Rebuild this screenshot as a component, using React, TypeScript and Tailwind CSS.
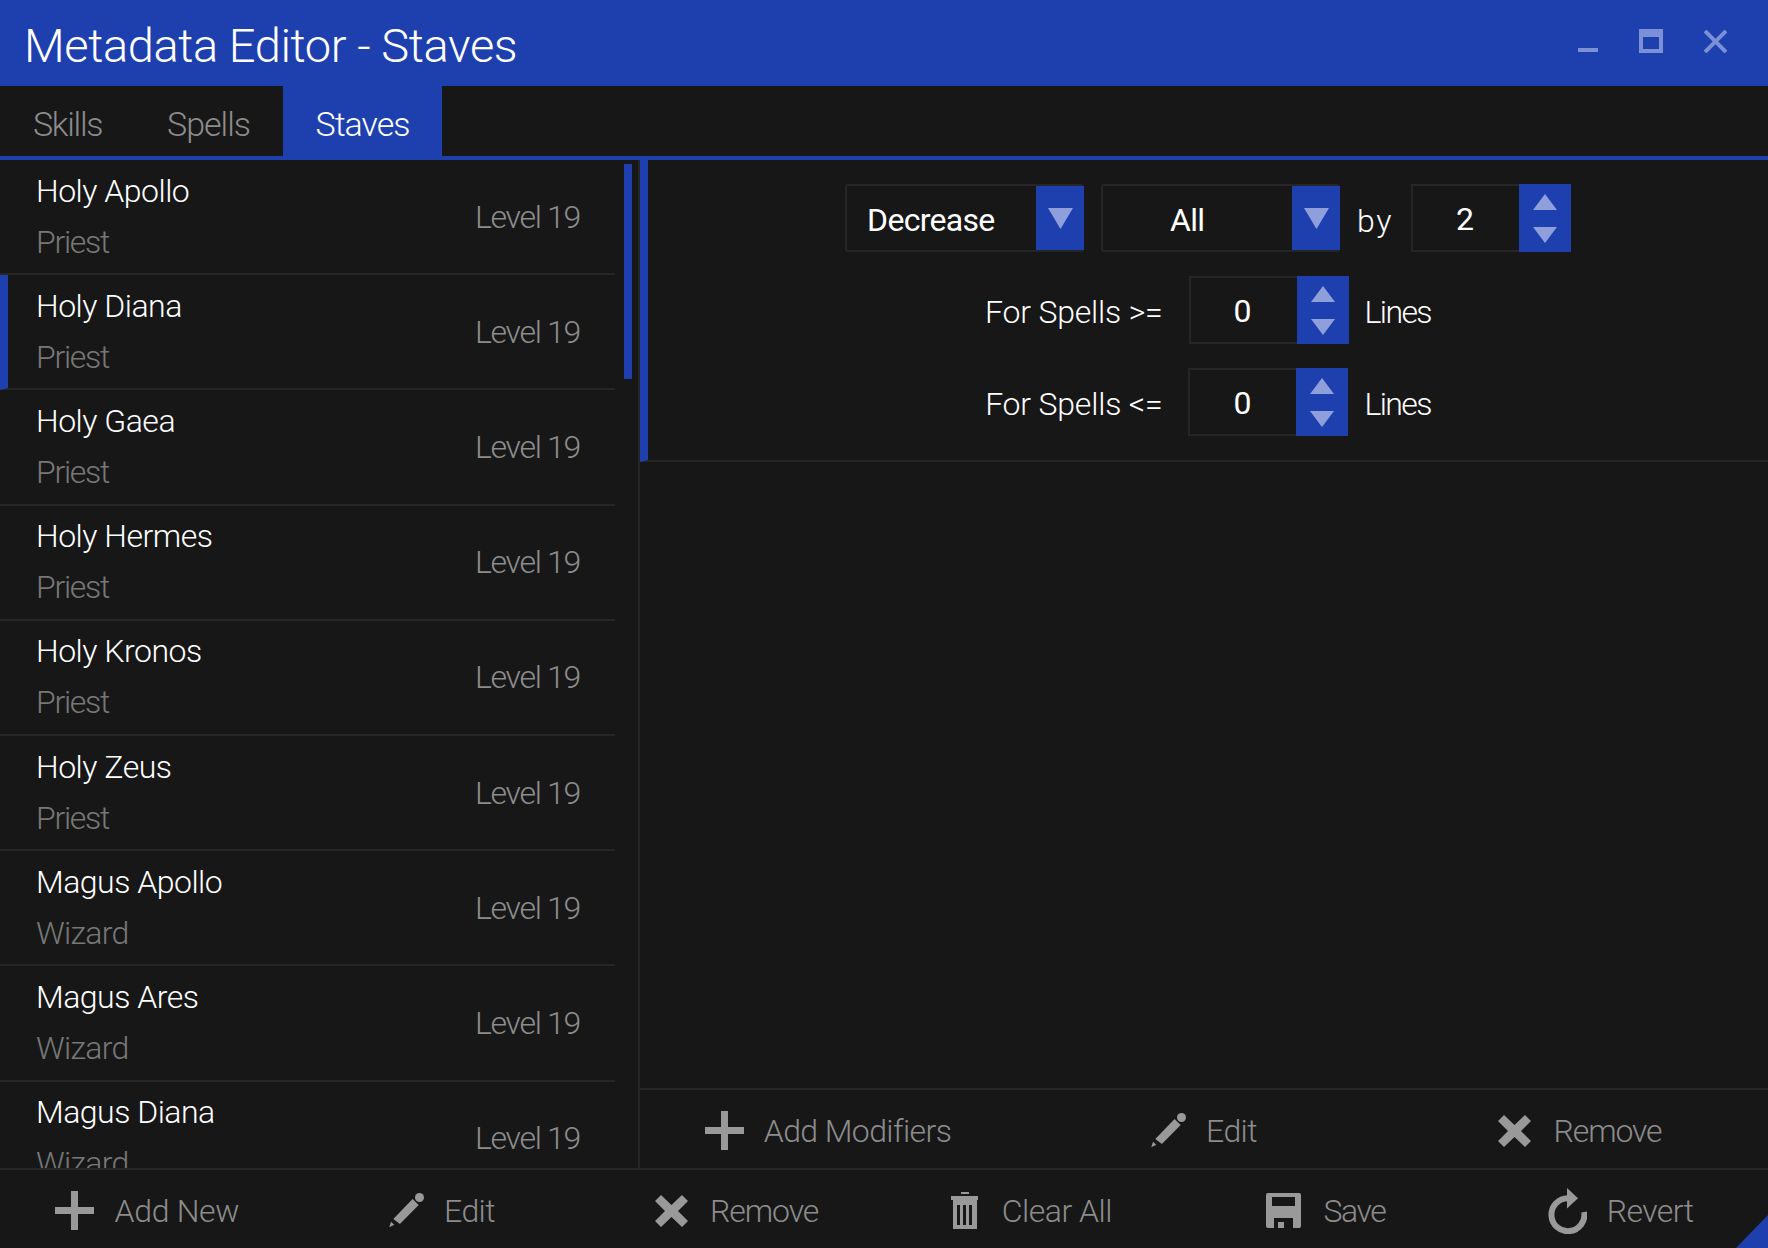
import type { ReactNode } from "react";

const FONT = "font-['Roboto','Open_Sans',sans-serif] font-light";

const staves = [
  { name: "Holy Apollo", kind: "Priest" },
  { name: "Holy Diana", kind: "Priest", selected: true },
  { name: "Holy Gaea", kind: "Priest" },
  { name: "Holy Hermes", kind: "Priest" },
  { name: "Holy Kronos", kind: "Priest" },
  { name: "Holy Zeus", kind: "Priest" },
  { name: "Magus Apollo", kind: "Wizard" },
  { name: "Magus Ares", kind: "Wizard" },
  { name: "Magus Diana", kind: "Wizard" },
];

function PlusIcon() {
  return (
    <svg width="39" height="39" viewBox="0 0 39 39" fill="#999">
      <path d="M16 0h7v16h16v7H23v16h-7V23H0v-7h16z" />
    </svg>
  );
}

function PencilIcon() {
  return (
    <svg width="35" height="35" viewBox="0 0 35 35" fill="#999">
      <path d="M4.300 26L23.600 6l6.100 6L10.900 31zM2 28.700L5.300 31.700 0.300 34.300z" />
      <circle cx="30.500" cy="4.500" r="4.500" />
    </svg>
  );
}

function CrossIcon() {
  return (
    <svg width="33" height="32" viewBox="0 0 33 32" fill="#999">
      <path d="M6 0l10.500 10L27 0l6 6-10 10 10 10-6 6-10.500-10L6 32l-6-6 10-10L0 6z" />
    </svg>
  );
}

function TrashIcon() {
  return (
    <svg width="27" height="37" viewBox="0 0 27 37" fill="#999">
      <path d="M10 0h8v2h-8zM0 4h27v4H0z" />
      <path d="M2 8h24v29H2zM6 13v20h3V13zM12 13v20h3V13zM18 13v20h3V13z" fillRule="evenodd" />
    </svg>
  );
}

function SaveIcon() {
  return (
    <svg width="35" height="35" viewBox="0 0 35 35" fill="#999">
      <path
        d="M2 0h31a2 2 0 0 1 2 2v31a2 2 0 0 1-2 2H2a2 2 0 0 1-2-2V2a2 2 0 0 1 2-2zM6 4v9h23V4zM8 25v10h19V25z"
        fillRule="evenodd"
      />
      <path d="M12 29h6v6h-6z" />
    </svg>
  );
}

function RevertIcon() {
  return (
    <svg width="39" height="46" viewBox="0 0 39 46" fill="none">
      <path d="M20 10.200A16.500 16.500 0 1 0 36.200 24" stroke="#999" strokeWidth="6" />
      <path d="M19 0l11 10.300L19 20.600z" fill="#999" />
    </svg>
  );
}

function ActionButton({
  icon,
  label,
  className = "gap-[20px] tracking-[-0.6px]",
}: {
  icon: ReactNode;
  label: string;
  className?: string;
}) {
  return (
    <div className={`flex items-center justify-center pt-[3px] text-[32px] text-[#8c8c8c] ${className}`}>
      {icon}
      <span>{label}</span>
    </div>
  );
}

function ArrowUp() {
  return (
    <svg width="24" height="16" viewBox="0 0 24 16" fill="#8f9fdc">
      <path d="M12 0l12 16H0z" />
    </svg>
  );
}

function ArrowDown() {
  return (
    <svg width="24" height="16" viewBox="0 0 24 16" fill="#8f9fdc">
      <path d="M0 0h24L12 16z" />
    </svg>
  );
}

function Combo({ label, textClass }: { label: string; textClass: string }) {
  return (
    <div className="flex h-[68px] w-[239px] rounded-[3px] border-2 border-[#262626]">
      <div className={`flex flex-1 items-center pt-[3px] text-[32px] font-normal tracking-[-0.7px] text-white ${textClass}`}>
        {label}
      </div>
      <div className="-mr-[2px] flex w-[48px] items-center justify-center bg-[#1e40af]">
        <svg width="25" height="21" viewBox="0 0 25 21" fill="#8f9fdc">
          <path d="M0 0h25L12.500 21z" />
        </svg>
      </div>
    </div>
  );
}

function Spinner({ value }: { value: string }) {
  return (
    <div className="flex h-[68px] w-[160px]">
      <div className="flex flex-1 items-center justify-center border-2 border-r-0 border-[#262626] pr-[2px] pt-[2px] text-[32px] font-normal text-white">
        {value}
      </div>
      <div className="flex w-[52px] flex-col items-center justify-center gap-[17px] bg-[#1e40af]">
        <ArrowUp />
        <ArrowDown />
      </div>
    </div>
  );
}

function StaveRow({ name, kind, selected }: { name: string; kind: string; selected?: boolean }) {
  return (
    <div
      className={`flex h-[115.2px] shrink-0 items-center justify-between border-b-2 border-[#262626] pr-[35px] last:h-[119px] ${
        selected ? "border-l-8 border-l-[#1e40af] pl-[28px]" : "pl-[36px]"
      }`}
    >
      <div className="flex flex-col gap-[2px]">
        <span className="text-[32px] leading-[49px] tracking-[-0.5px] text-white">{name}</span>
        <span
          className={`text-[32px] leading-[49px] text-[#777] ${
            kind === "Priest" ? "tracking-[-1.3px]" : "tracking-[-0.7px]"
          }`}
        >
          {kind}
        </span>
      </div>
      <span className="text-[32px] tracking-[-1.3px] text-[#8c8c8c]">Level 19</span>
    </div>
  );
}

export default function App() {
  return (
    <div className={`flex h-[1248px] w-[1768px] flex-col overflow-hidden bg-[#171717] ${FONT}`}>
      <header className="flex h-[86px] shrink-0 items-center justify-between bg-[#1e40af] pl-[24px] pr-[41px]">
        <h1 className="pt-[6px] text-[47px] font-light tracking-[-0.4px] text-white">Metadata Editor - Staves</h1>
        <div className="mb-[4px] flex items-start">
          <div className="mt-[19px] h-[4px] w-[20px] bg-[#7b90d6]" />
          <div className="ml-[41px] h-[24px] w-[24px] border-4 border-t-8 border-[#7b90d6]" />
          <svg className="ml-[41px] mt-[1px]" width="23" height="23" viewBox="0 0 23 23" stroke="#7b90d6" strokeWidth="4">
            <path d="M1 1l21 21M22 1L1 22" />
          </svg>
        </div>
      </header>

      <nav className="flex h-[74px] shrink-0 border-b-4 border-[#1e40af] text-[34px] tracking-[-1px]">
        <div className="flex w-[134px] items-center pl-[33px] pt-[6px] tracking-[-1.3px] text-[#8c8c8c]">Skills</div>
        <div className="flex w-[149px] items-center pl-[33px] pt-[6px] text-[#8c8c8c]">Spells</div>
        <div className="flex w-[159px] items-center justify-center bg-[#1e40af] pt-[6px] text-white">Staves</div>
      </nav>

      <main className="flex min-h-0 flex-1">
        <section className="relative flex w-[640px] shrink-0 flex-col overflow-hidden border-r-2 border-[#262626] pr-[23px]">
          {staves.map((s) => (
            <StaveRow key={s.name} {...s} />
          ))}
          <div className="absolute left-[624px] top-[4px] h-[215px] w-[8px] bg-[#1e40af]" />
        </section>

        <section className="flex min-w-0 flex-1 flex-col">
          <div className="flex h-[302px] shrink-0 flex-col items-center gap-[24px] border-b-2 border-l-8 border-[#262626] border-l-[#1e40af] pt-[24px] text-[32px] text-white">
            <div className="flex items-center">
              <Combo label="Decrease" textClass="pl-[20px]" />
              <div className="ml-[17px]">
                <Combo label="All" textClass="pl-[67px]" />
              </div>
              <span className="ml-[17px] mr-[18px] pt-[5px] tracking-[1.5px]">by</span>
              <Spinner value="2" />
            </div>
            <div className="flex items-center">
              <span className="mr-[26px] pt-[3px] tracking-[-0.2px]">For Spells &gt;=</span>
              <Spinner value="0" />
              <span className="ml-[16px] pt-[3px] tracking-[-1.6px]">Lines</span>
            </div>
            <div className="flex items-center">
              <span className="mr-[26px] pt-[3px] tracking-[-0.2px]">For Spells &lt;=</span>
              <Spinner value="0" />
              <span className="ml-[16px] pt-[3px] tracking-[-1.6px]">Lines</span>
            </div>
          </div>
          <div className="flex-1" />
          <div className="grid h-[80px] shrink-0 grid-cols-3 border-t-2 border-[#262626]">
            <ActionButton icon={<PlusIcon />} label="Add Modifiers" />
            <ActionButton icon={<PencilIcon />} label="Edit" />
            <ActionButton icon={<CrossIcon />} label="Remove" className="gap-[22px] tracking-[-1.1px]" />
          </div>
        </section>
      </main>

      <footer className="relative grid h-[80px] shrink-0 grid-cols-6 border-t-2 border-[#262626]">
        <ActionButton icon={<PlusIcon />} label="Add New" className="gap-[20px] tracking-[-0.3px]" />
        <ActionButton icon={<PencilIcon />} label="Edit" />
        <ActionButton icon={<CrossIcon />} label="Remove" className="gap-[22px] tracking-[-1.1px]" />
        <ActionButton icon={<TrashIcon />} label="Clear All" className="gap-[24px] tracking-[-0.5px]" />
        <ActionButton icon={<SaveIcon />} label="Save" className="gap-[22px] tracking-[-1.4px]" />
        <ActionButton icon={<RevertIcon />} label="Revert" />
        <svg className="absolute bottom-0 right-0" width="32" height="33" viewBox="0 0 32 33" fill="#1e40af">
          <path d="M32 0v33H0z" />
        </svg>
      </footer>
    </div>
  );
}
